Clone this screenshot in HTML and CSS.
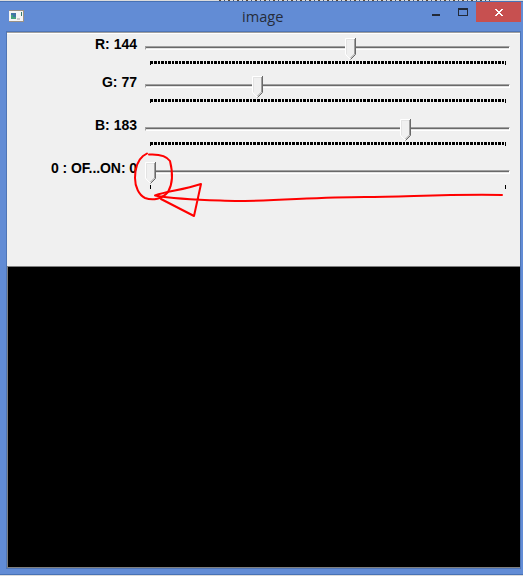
FILE: index.html
```html
<!DOCTYPE html>
<html lang="en">
<head>
<meta charset="utf-8">
<title>image</title>
<link rel="stylesheet" href="styles.css">
</head>
<body>
<div class="behind"></div>
<div class="window">
  <header class="titlebar">
    <svg class="app-icon" width="15" height="12" viewBox="0 0 15 12" shape-rendering="crispEdges">
      <path fill="#f5f5f5" d="M0 0h15v12H0z"/><path fill="#9a9186" d="M0 0h15v1H0zM14 1h1v11h-1zM0 11h15v1H0z"/>
      <path fill="#4275a5" d="M2 3h5v6H2z"/><path fill="#45a37c" d="M2 5h2v4H2zM4 7h3v2H4z"/>
      <path fill="#367e6d" d="M12 2h1v4h-1z"/><path fill="#ccc" d="M8 8h3v2H8z"/>
    </svg>
    <h1 class="title">image</h1>
    <div class="controls">
      <svg width="46" height="20" viewBox="0 0 46 20" shape-rendering="crispEdges"><path fill="#222a38" d="M2 12h8v2H2z"/><path fill="#222a38" fill-rule="evenodd" d="M28 6h10v8H28zM29 8v5h8V8z"/></svg>
      <div class="close"><svg width="8" height="7" viewBox="0 0 8 7" shape-rendering="crispEdges"><path fill="#fff" d="M0 0h2v1h1v1h2V1h1V0h2v1H7v1H6v1H5v1h1v1h1v1h1v1H6V6H5V5H3v1H2v1H0V6h1V5h1V4h1V3H2V2H1V1H0z"/></svg></div>
    </div>
  </header>
  <main class="client">
    <section class="panel">
      <div class="row"><label>R: 144</label><div class="slider"><div class="track"></div><svg class="ticks" data-steps="255"></svg><svg class="thumb" style="left:200px"></svg></div></div>
      <div class="row"><label>G: 77</label><div class="slider"><div class="track"></div><svg class="ticks" data-steps="255"></svg><svg class="thumb" style="left:107px"></svg></div></div>
      <div class="row"><label>B: 183</label><div class="slider"><div class="track"></div><svg class="ticks" data-steps="255"></svg><svg class="thumb" style="left:255px"></svg></div></div>
      <div class="row"><label class="switch">0 : OF...ON: 0</label><div class="slider"><div class="track"></div><svg class="ticks" data-steps="1"></svg><svg class="thumb" style="left:0px"></svg></div></div>
    </section>
    <section class="canvas"></section>
  </main>
</div>
<svg class="annotation" width="523" height="576" viewBox="0 0 523 576">
  <path d="M147 153.500L143 156C137 161 135 170 135 178C135 187 139 195 145 198C153 201 162 199 168 192C174 182 172 169 170 161C166 155 158 154 149 154.500"/>
  <path d="M502 195C445 194 405 197 365 197C315 197 280 201 235 201C207 200 180 200 155 195.500C168 191 183 190 201 184L194 216L161 199"/>
</svg>
<script src="sliders.js"></script>
</body>
</html>
```
FILE: styles.css
```css
* { box-sizing: border-box; }
body { margin: 0; width: 523px; height: 576px; overflow: hidden; background: #dcdcdc; font-family: "Liberation Sans", Arial, sans-serif; }
.behind { height: 1px; margin-left: 219px; width: 271px; background: repeating-linear-gradient(90deg, #5c4a38 0 2px, #dcdcdc 2px 5px, #42506c 5px 6px, #dcdcdc 6px 9px); }
.window { width: 523px; height: 574px; border: solid #4872b5; border-width: 1px 0; background: #628cd5; }
.titlebar { display: flex; height: 29px; padding: 0 2px 0 9px; align-items: flex-start; }
.app-icon { margin-top: 8px; }
.title { flex: 1; margin: 2px 0 0 218px; font: 14.6px/24px "Open Sans", "Noto Sans", sans-serif; color: #262c3a; }
.controls { display: flex; height: 20px; }
.close { display: flex; width: 45px; height: 20px; padding-top: 1px; align-items: center; justify-content: center; background: #c75050; }
.client { margin-left: 6px; width: 515px; height: 538px; border: 1px solid #4f75b5; background: #f0f0f0; }
.panel { height: 235px; padding-top: 5px; border-top: 1px solid #a0a0a0; border-bottom: 1px solid #808080; box-shadow: inset 0 1px #fff; }
.row { display: flex; height: 43px; }
.row:first-child { height: 38px; }
.row label { width: 131px; height: 16px; padding-right: 1px; font: bold 14px/12px "Liberation Sans", Arial, sans-serif; color: #000; text-align: right; white-space: nowrap; }
.row .switch { letter-spacing: -.08px; }
.slider { position: relative; width: 365px; margin-left: 7px; padding-top: 8px; }
.track { height: 4px; border-top: 1px solid #a0a0a0; border-bottom: 1px solid #fff; border-right: 1px solid #fff; border-left: 1px solid #a0a0a0; background: linear-gradient(#696969 50%, #e3e3e3 50%); }
.ticks { display: block; width: 356px; height: 4px; margin: 11px 0 0 5px; }
.thumb { position: absolute; top: 0; width: 11px; height: 22px; }
.canvas { height: 301px; background: #000; border-left: 1px solid #808080; border-bottom: 1px solid #808080; }
.annotation { position: absolute; left: 0; top: 0; fill: none; stroke: #f00; stroke-width: 2; stroke-linejoin: round; stroke-linecap: round; pointer-events: none; }
```
FILE: sliders.js
```js
document.querySelectorAll('.ticks').forEach(svg => {
  const steps = Number(svg.dataset.steps);
  let d = '';
  for (let i = 0; i <= steps; i++) {
    const x = Math.floor(i * 355 / steps);
    const h = i === 0 || i === steps ? 4 : 3;
    d += `M${x} 0h1v${h}h-1z`;
  }
  svg.innerHTML = `<path shape-rendering="crispEdges" d="${d}"/>`;
});
document.querySelectorAll('.thumb').forEach(svg => {
  svg.innerHTML = `<path fill="#f0f0f0" d="M0 0h11v16.500L5.500 22L0 16.500z"/>
    <path fill="none" stroke="#fff" d="M10 .5H.5V16.500L5.500 21.500"/>
    <path fill="none" stroke="#e3e3e3" d="M9 1.500H1.500V16"/>
    <path fill="none" stroke="#a0a0a0" d="M9.500 1V16L5.500 20"/>
    <path fill="none" stroke="#696969" d="M10.500 0V16.500L5.500 21.500"/>`;
});
```
